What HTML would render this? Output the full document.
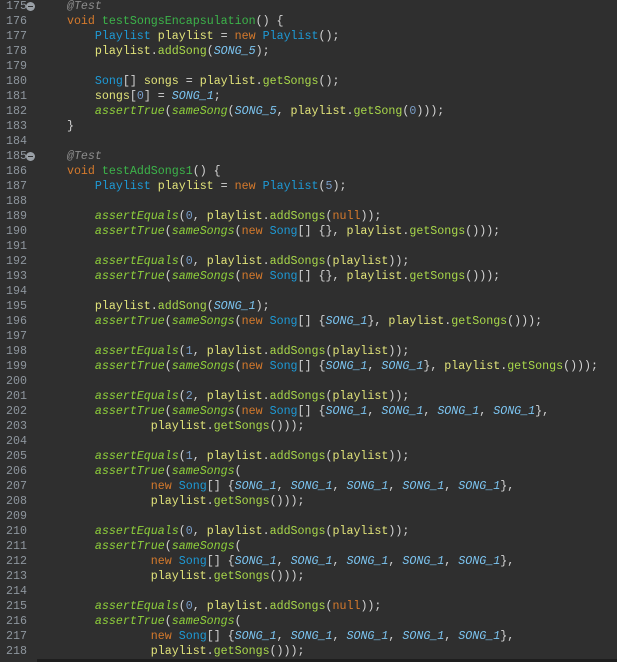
<!DOCTYPE html><html><head><style>
body{margin:0;background:#2f2f2f;width:617px;height:662px;overflow:hidden;position:relative}
#c{position:absolute;left:0;top:-1px;font-family:"Liberation Mono",monospace;font-size:11.65px;line-height:15px;color:#d4d4d4}
.l{height:15px;position:relative;white-space:pre}
.n{display:inline-block;width:39px;padding-left:6px;box-sizing:border-box;color:#8e969e}
.k{color:#d67a2c}.t{color:#1e9ad6}.v{color:#e2e47a}.m{color:#a8d84a}.d{color:#3cb44a}
.a{color:#8fd13b;font-style:italic}.c{color:#7cc4f0;font-style:italic}.num{color:#7a9ec8}.an{color:#8c8c8c;font-style:italic}
.f{position:absolute;left:26px;top:3px;width:9px;height:9px;border-radius:50%;background:#9aa0a6}
.f:after{content:"";position:absolute;left:2px;top:4px;width:5px;height:1px;background:#2f2f2f}
#b{position:absolute;left:37px;right:0;bottom:0;height:3px;background:#1e1e1e}
</style></head><body><div id="c"><div class="l"><span class="n">175</span><span class="f"></span>    <span class="an">@Test</span></div><div class="l"><span class="n">176</span>    <span class="k">void</span> <span class="d">testSongsEncapsulation</span>() {</div><div class="l"><span class="n">177</span>        <span class="t">Playlist</span> <span class="v">playlist</span> = <span class="k">new</span> <span class="t">Playlist</span>();</div><div class="l"><span class="n">178</span>        <span class="v">playlist</span>.<span class="m">addSong</span>(<span class="c">SONG_5</span>);</div><div class="l"><span class="n">179</span></div><div class="l"><span class="n">180</span>        <span class="t">Song</span>[] <span class="v">songs</span> = <span class="v">playlist</span>.<span class="m">getSongs</span>();</div><div class="l"><span class="n">181</span>        <span class="v">songs</span>[<span class="num">0</span>] = <span class="c">SONG_1</span>;</div><div class="l"><span class="n">182</span>        <span class="a">assertTrue</span>(<span class="a">sameSong</span>(<span class="c">SONG_5</span>, <span class="v">playlist</span>.<span class="m">getSong</span>(<span class="num">0</span>)));</div><div class="l"><span class="n">183</span>    }</div><div class="l"><span class="n">184</span></div><div class="l"><span class="n">185</span><span class="f"></span>    <span class="an">@Test</span></div><div class="l"><span class="n">186</span>    <span class="k">void</span> <span class="d">testAddSongs1</span>() {</div><div class="l"><span class="n">187</span>        <span class="t">Playlist</span> <span class="v">playlist</span> = <span class="k">new</span> <span class="t">Playlist</span>(<span class="num">5</span>);</div><div class="l"><span class="n">188</span></div><div class="l"><span class="n">189</span>        <span class="a">assertEquals</span>(<span class="num">0</span>, <span class="v">playlist</span>.<span class="m">addSongs</span>(<span class="k">null</span>));</div><div class="l"><span class="n">190</span>        <span class="a">assertTrue</span>(<span class="a">sameSongs</span>(<span class="k">new</span> <span class="t">Song</span>[] {}, <span class="v">playlist</span>.<span class="m">getSongs</span>()));</div><div class="l"><span class="n">191</span></div><div class="l"><span class="n">192</span>        <span class="a">assertEquals</span>(<span class="num">0</span>, <span class="v">playlist</span>.<span class="m">addSongs</span>(<span class="v">playlist</span>));</div><div class="l"><span class="n">193</span>        <span class="a">assertTrue</span>(<span class="a">sameSongs</span>(<span class="k">new</span> <span class="t">Song</span>[] {}, <span class="v">playlist</span>.<span class="m">getSongs</span>()));</div><div class="l"><span class="n">194</span></div><div class="l"><span class="n">195</span>        <span class="v">playlist</span>.<span class="m">addSong</span>(<span class="c">SONG_1</span>);</div><div class="l"><span class="n">196</span>        <span class="a">assertTrue</span>(<span class="a">sameSongs</span>(<span class="k">new</span> <span class="t">Song</span>[] {<span class="c">SONG_1</span>}, <span class="v">playlist</span>.<span class="m">getSongs</span>()));</div><div class="l"><span class="n">197</span></div><div class="l"><span class="n">198</span>        <span class="a">assertEquals</span>(<span class="num">1</span>, <span class="v">playlist</span>.<span class="m">addSongs</span>(<span class="v">playlist</span>));</div><div class="l"><span class="n">199</span>        <span class="a">assertTrue</span>(<span class="a">sameSongs</span>(<span class="k">new</span> <span class="t">Song</span>[] {<span class="c">SONG_1</span>, <span class="c">SONG_1</span>}, <span class="v">playlist</span>.<span class="m">getSongs</span>()));</div><div class="l"><span class="n">200</span></div><div class="l"><span class="n">201</span>        <span class="a">assertEquals</span>(<span class="num">2</span>, <span class="v">playlist</span>.<span class="m">addSongs</span>(<span class="v">playlist</span>));</div><div class="l"><span class="n">202</span>        <span class="a">assertTrue</span>(<span class="a">sameSongs</span>(<span class="k">new</span> <span class="t">Song</span>[] {<span class="c">SONG_1</span>, <span class="c">SONG_1</span>, <span class="c">SONG_1</span>, <span class="c">SONG_1</span>},</div><div class="l"><span class="n">203</span>                <span class="v">playlist</span>.<span class="m">getSongs</span>()));</div><div class="l"><span class="n">204</span></div><div class="l"><span class="n">205</span>        <span class="a">assertEquals</span>(<span class="num">1</span>, <span class="v">playlist</span>.<span class="m">addSongs</span>(<span class="v">playlist</span>));</div><div class="l"><span class="n">206</span>        <span class="a">assertTrue</span>(<span class="a">sameSongs</span>(</div><div class="l"><span class="n">207</span>                <span class="k">new</span> <span class="t">Song</span>[] {<span class="c">SONG_1</span>, <span class="c">SONG_1</span>, <span class="c">SONG_1</span>, <span class="c">SONG_1</span>, <span class="c">SONG_1</span>},</div><div class="l"><span class="n">208</span>                <span class="v">playlist</span>.<span class="m">getSongs</span>()));</div><div class="l"><span class="n">209</span></div><div class="l"><span class="n">210</span>        <span class="a">assertEquals</span>(<span class="num">0</span>, <span class="v">playlist</span>.<span class="m">addSongs</span>(<span class="v">playlist</span>));</div><div class="l"><span class="n">211</span>        <span class="a">assertTrue</span>(<span class="a">sameSongs</span>(</div><div class="l"><span class="n">212</span>                <span class="k">new</span> <span class="t">Song</span>[] {<span class="c">SONG_1</span>, <span class="c">SONG_1</span>, <span class="c">SONG_1</span>, <span class="c">SONG_1</span>, <span class="c">SONG_1</span>},</div><div class="l"><span class="n">213</span>                <span class="v">playlist</span>.<span class="m">getSongs</span>()));</div><div class="l"><span class="n">214</span></div><div class="l"><span class="n">215</span>        <span class="a">assertEquals</span>(<span class="num">0</span>, <span class="v">playlist</span>.<span class="m">addSongs</span>(<span class="k">null</span>));</div><div class="l"><span class="n">216</span>        <span class="a">assertTrue</span>(<span class="a">sameSongs</span>(</div><div class="l"><span class="n">217</span>                <span class="k">new</span> <span class="t">Song</span>[] {<span class="c">SONG_1</span>, <span class="c">SONG_1</span>, <span class="c">SONG_1</span>, <span class="c">SONG_1</span>, <span class="c">SONG_1</span>},</div><div class="l"><span class="n">218</span>                <span class="v">playlist</span>.<span class="m">getSongs</span>()));</div></div><div id="b"></div></body></html>
